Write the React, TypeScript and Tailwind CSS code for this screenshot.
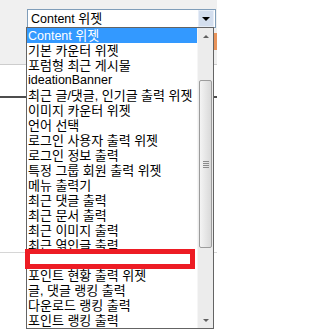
import type { ReactNode } from "react";

const items = [
  "Content 위젯",
  "기본 카운터 위젯",
  "포럼형 최근 게시물",
  "ideationBanner",
  "최근 글/댓글, 인기글 출력 위젯",
  "이미지 카운터 위젯",
  "언어 선택",
  "로그인 사용자 출력 위젯",
  "로그인 정보 출력",
  "특정 그룹 회원 출력 위젯",
  "메뉴 출력기",
  "최근 댓글 출력",
  "최근 문서 출력",
  "최근 이미지 출력",
  "최근 엮인글 출력",
  "최근 방문자 출력",
  "포인트 현황 출력 위젯",
  "글, 댓글 랭킹 출력",
  "다운로드 랭킹 출력",
  "포인트 랭킹 출력",
];

// Hangul runs get their own size so they sit next to the latin text like Gulim does
function Label({ text }: { text: string }) {
  const parts = text.split(/([\uAC00-\uD7A3]+)/);
  const out: ReactNode[] = parts.map((p, i) =>
    /[\uAC00-\uD7A3]/.test(p) ? (
      <span key={i} className="text-[13px]">
        {p}
      </span>
    ) : (
      <span key={i}>{p}</span>
    )
  );
  return <>{out}</>;
}

export default function App() {
  return (
    <div
      className="relative w-[217px] h-[333px] overflow-hidden bg-white text-[12.5px] text-black"
      style={{ fontFamily: '"Liberation Sans", "Noto Sans CJK KR", sans-serif' }}
    >
      {/* page behind the dropdown */}
      <div className="h-[65px] bg-[#f0f0f0] border-b border-[#cdcdcd] flex flex-col">
        <div className="relative ml-[27px] mt-[9px] w-[189px] h-[19px] border border-[#7f9db9] bg-white flex items-center z-10">
          <div className="flex-1 pl-[3px] leading-[17px] whitespace-nowrap">
            <Label text="Content 위젯" />
          </div>
          <div className="w-[16px] h-[17px] mr-px bg-[#d3deee] border border-[#e6edf7] flex items-center justify-center">
            <div className="w-0 h-0 border-l-[4px] border-r-[4px] border-t-[4px] border-l-transparent border-r-transparent border-t-black" />
          </div>

          {/* open list */}
          <div className="absolute left-[-2px] top-[17px] w-[188px] border border-[#646464] bg-white flex">
            <ul className="flex-1">
              {items.map((item, i) => (
                <li
                  key={item}
                  className={
                    i === 0
                      ? "h-[15px] leading-[15px] pl-px whitespace-nowrap overflow-hidden bg-[#3399ff] text-white"
                      : "h-[15px] leading-[15px] pl-px whitespace-nowrap overflow-hidden"
                  }
                >
                  <Label text={item} />
                </li>
              ))}
            </ul>
            <div className="w-[16px] bg-[#ececec] border-l border-[#f6f6f6] flex flex-col">
              <div className="h-[16px] flex items-center justify-center">
                <div className="w-0 h-0 border-l-[3px] border-r-[3px] border-b-[3px] border-l-transparent border-r-transparent border-b-[#606060]" />
              </div>
              <div className="h-[36px]" />
              <div className="h-[168px] mx-px rounded-[2px] border border-[#9c9c9c] bg-gradient-to-r from-[#f4f4f4] to-[#d9d9d9] flex flex-col items-center justify-center gap-[1px]">
                <div className="w-[6px] h-px bg-[#8a8a8a]" />
                <div className="w-[6px] h-px bg-[#8a8a8a]" />
                <div className="w-[6px] h-px bg-[#8a8a8a]" />
                <div className="w-[6px] h-px bg-[#8a8a8a]" />
              </div>
              <div className="flex-1" />
              <div className="h-[16px] flex items-center justify-center">
                <div className="w-0 h-0 border-l-[3px] border-r-[3px] border-t-[3px] border-l-transparent border-r-transparent border-t-[#606060]" />
              </div>
            </div>
          </div>
        </div>
        <div className="self-end mt-[5px] w-[4px] h-[17px] bg-[#e8935a]" />
      </div>
      <div className="mt-[31px] h-[2px] bg-[#4d4d4d]" />
      <div className="mt-[154px] h-px bg-[#d6d6d6]" />

      {/* red highlight drawn over the list */}
      <div className="absolute z-20 left-[25px] top-[249px] w-[170px] h-[20px] border-[5px] border-[#ed1c24] bg-white" />
    </div>
  );
}
